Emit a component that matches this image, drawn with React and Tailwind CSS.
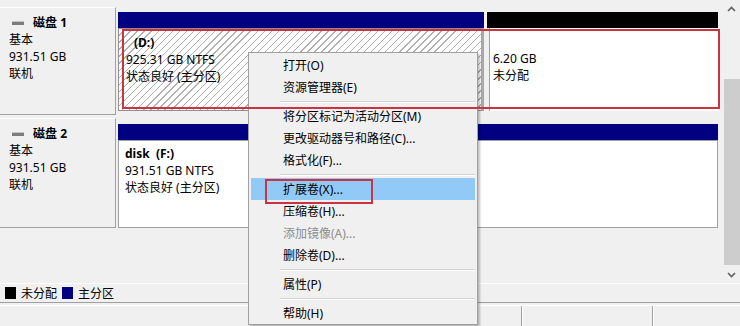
import React from "react"

const Chevron = ({ down }) => (
    <svg width="9" height="6" viewBox="0 0 9 6" className="block">
        <polyline
            points={down ? "1,1 4.5,4.5 8,1" : "1,5 4.5,1.5 8,5"}
            fill="none"
            stroke="#606060"
            strokeWidth="1.6"
        />
    </svg>
)

const DiskLabel = ({ n, h }) => (
    <div className={`w-[116px] shrink-0 ${h} border-t border-t-white border-r border-r-[#a0a0a0] border-b border-b-[#a0a0a0] pl-[9px] pt-[6px]`}>
        <div className="flex items-center">
            <span className="w-[12px] h-[4px] bg-[#7c7c7c] border-t border-t-[#c4c4c4] ml-[3px] mr-[9px]" />
            <span className="font-bold">磁盘 {n}</span>
        </div>
        <div>基本</div>
        <div>931.51 GB</div>
        <div>联机</div>
    </div>
)

const MenuItem = ({ label, active, disabled }) => (
    <div className={`h-[22px] flex items-center pl-[32px] ${active ? "bg-[#91c9f7]" : ""} ${disabled ? "text-[#8d8d8d]" : ""}`}>
        {label}
    </div>
)

const Sep = () => (
    <div className="h-[7px] pt-[3px] pl-[29px]">
        <div className="border-t border-t-[#d4d4d4] border-b border-b-white" />
    </div>
)

export default function App() {
    return (
        <div className='w-[740px] h-[326px] relative overflow-hidden bg-[#f0f0f0] text-black text-[12px] leading-[17px] font-[family-name:"Noto_Sans","Noto_Sans_CJK_SC",sans-serif]'>
            <div className="flex h-[283px]">
                <div className="w-[722px] pt-[7px]">
                    {/* 磁盘 1 */}
                    <div className="flex">
                        <DiskLabel n={1} h="h-[108px]" />
                        <div className="ml-[2px] w-[602px] pt-[5px]">
                            <div className="flex h-[16px] gap-[3px]">
                                <div className="w-[366px] bg-[#000080]" />
                                <div className="flex-1 bg-black mr-[2px]" />
                            </div>
                            <div className="flex h-[83px] gap-[5px]">
                                <div className="w-[366px] border border-[#909090] border-r-[3px] border-r-[#a8a8a8] bg-[image:repeating-linear-gradient(135deg,#ffffff_0px,#ffffff_4px,#b0b0b0_4px,#b0b0b0_5px)] pl-[7px] pt-[5px]">
                                    <div className="font-bold ml-[8px]">(D:)</div>
                                    <div>925.31 GB NTFS</div>
                                    <div>状态良好 (主分区)</div>
                                </div>
                                <div className="flex-1 bg-white border-l border-l-[#a0a0a0] mr-[2px] pl-[3px] pt-[5px]">
                                    <div className="h-[17px]" />
                                    <div>6.20 GB</div>
                                    <div>未分配</div>
                                </div>
                            </div>
                        </div>
                    </div>

                    {/* 磁盘 2 */}
                    <div className="flex mt-[3px]">
                        <DiskLabel n={2} h="h-[110px]" />
                        <div className="ml-[2px] w-[602px] pt-[6px]">
                            <div className="h-[16px] w-[600px] bg-[#000080]" />
                            <div className="h-[88px] w-[600px] bg-white border border-[#a0a0a0] pl-[6px] pt-[4px]">
                                <div className="font-bold">disk&nbsp;&nbsp;(F:)</div>
                                <div>931.51 GB NTFS</div>
                                <div>状态良好 (主分区)</div>
                            </div>
                        </div>
                    </div>
                </div>

                {/* 滚动条 */}
                <div className="w-[18px] flex flex-col">
                    <div className="h-[17px] flex items-center justify-center">
                        <Chevron />
                    </div>
                    <div className="flex-1 pt-[62px] pl-[2px]">
                        <div className="h-[186px] bg-[#cdcdcd]" />
                    </div>
                    <div className="h-[17px] flex items-center justify-center">
                        <Chevron down />
                    </div>
                </div>
            </div>

            {/* 图例 */}
            <div className="h-[20px] border-t border-t-white border-b border-b-[#a0a0a0] flex items-center pl-[5px]">
                <span className="w-[11px] h-[12px] bg-black mr-[5px]" />
                <span className="mr-[5px]">未分配</span>
                <span className="w-[11px] h-[12px] bg-[#000080] mr-[5px]" />
                <span>主分区</span>
            </div>

            {/* 状态栏 */}
            <div className="mt-[2px] h-[21px] border-t border-t-white flex">
                <div className="w-[522px] border-r border-r-[#a0a0a0]" />
                <div className="w-[131px] border-l border-l-white border-r border-r-[#a0a0a0]" />
                <div className="flex-1 border-l border-l-white" />
            </div>

            {/* 右键菜单 */}
            <div className="absolute left-[248px] top-[52px] w-[230px] bg-[#f0f0f0] border border-[#a0a0a0] px-[2px] pt-[1px] shadow-[2px_2px_2px_rgba(0,0,0,0.25)]">
                <MenuItem label="打开(O)" />
                <MenuItem label="资源管理器(E)" />
                <Sep />
                <MenuItem label="将分区标记为活动分区(M)" />
                <MenuItem label="更改驱动器号和路径(C)..." />
                <MenuItem label="格式化(F)..." />
                <Sep />
                <MenuItem label="扩展卷(X)..." active />
                <MenuItem label="压缩卷(H)..." />
                <MenuItem label="添加镜像(A)..." disabled />
                <MenuItem label="删除卷(D)..." />
                <Sep />
                <MenuItem label="属性(P)" />
                <Sep />
                <MenuItem label="帮助(H)" />
            </div>

            {/* 标注框 */}
            <div className="absolute left-[122px] top-[29px] w-[598px] h-[80px] border-2 border-[#cc3340]" />
            <div className="absolute left-[265px] top-[179px] w-[108px] h-[25px] border-2 border-[#cc3340]" />
        </div>
    )
}
